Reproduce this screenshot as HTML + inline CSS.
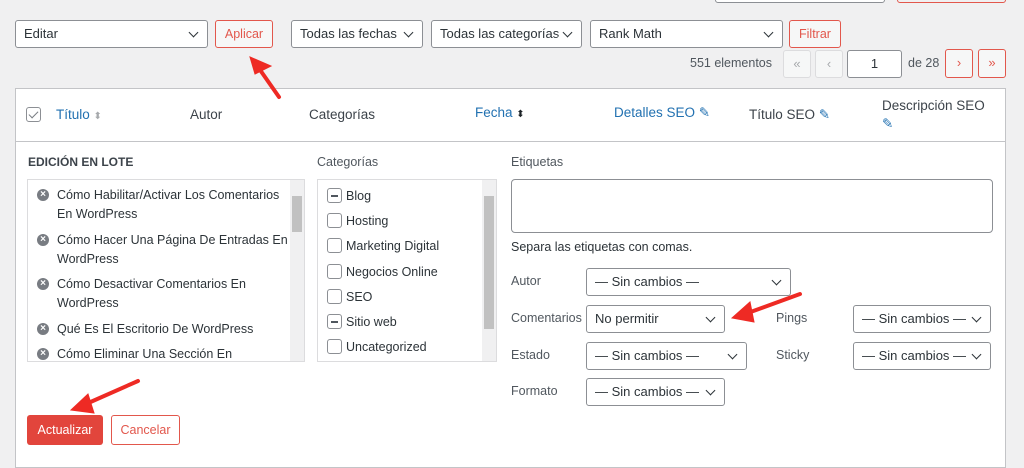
<!DOCTYPE html>
<html><head><meta charset="utf-8"><style>
*{box-sizing:border-box;margin:0;padding:0}
body{width:1024px;height:462px;background:#f0f0f1;font-family:"Liberation Sans",sans-serif;font-size:13px;color:#3c434a;position:relative;overflow:hidden}
.a{position:absolute}
.sel{position:absolute;background:#fff;border:1px solid #8c8f94;border-radius:3px;height:28px;padding:0 8px;line-height:26px;font-size:13px;color:#2c3338;white-space:nowrap;overflow:hidden}
.sel:after{content:"";position:absolute;right:10px;top:8px;width:6px;height:6px;border-right:1.6px solid #2c3338;border-bottom:1.6px solid #2c3338;transform:rotate(45deg);background:#fff;box-shadow:4px 4px 0 4px #fff}
.btn{position:absolute;border:1px solid #e2574c;border-radius:3px;background:#f6f7f7;color:#e2574c;text-align:center;font-size:12.5px}
.pg{position:absolute;border:1px solid #dcdcde;border-radius:3px;background:#f6f7f7;color:#a7aaad;text-align:center;height:28px;line-height:26px;width:28px}
.pr{border-color:#e2574c;color:#e2574c}
.lab{position:absolute;font-size:12.5px;color:#50575e}
.cb{display:inline-block;width:15px;height:15px;border:1px solid #8c8f94;border-radius:3px;vertical-align:-3px;margin-right:4px;position:relative;background:#fff}
.cb.m:after{content:"";position:absolute;left:3px;right:3px;top:6px;height:1.5px;background:#50575e}
.li{position:absolute;left:10px;font-size:12.5px;line-height:19px;color:#2c3338}
.x{position:absolute;left:-1px;top:3px;width:12px;height:12px;border-radius:50%;background:#787c82;color:#fff;font-size:10px;line-height:12px;text-align:center;font-weight:bold}
.blue{color:#2271b1}
</style></head><body>
<div class="a" style="left:715px;top:-10px;width:170px;height:13px;border:1px solid #8c8f94;border-radius:3px;background:#fff"></div>
<div class="a" style="left:897px;top:-10px;width:109px;height:13px;border:1px solid #e2574c;border-radius:3px"></div>

<div class="sel" style="left:15px;top:20px;width:193px">Editar</div>
<div class="btn" style="left:215px;top:20px;width:58px;height:28px;line-height:26px">Aplicar</div>
<div class="sel" style="left:291px;top:20px;width:132px">Todas las fechas</div>
<div class="sel" style="left:431px;top:20px;width:151px">Todas las categorías</div>
<div class="sel" style="left:590px;top:20px;width:193px">Rank Math</div>
<div class="btn" style="left:789px;top:20px;width:52px;height:28px;line-height:26px">Filtrar</div>

<div class="a" style="left:690px;top:56px;font-size:12.5px;color:#50575e">551 elementos</div>
<div class="pg" style="left:783px;top:50px">«</div>
<div class="pg" style="left:815px;top:50px">‹</div>
<div class="a" style="left:847px;top:50px;width:55px;height:28px;border:1px solid #8c8f94;border-radius:3px;background:#fff;text-align:center;line-height:26px;color:#2c3338">1</div>
<div class="a" style="left:908px;top:56px;font-size:12.5px;color:#50575e">de 28</div>
<div class="pg pr" style="left:945px;top:49px;height:29px">›</div>
<div class="pg pr" style="left:978px;top:49px;height:29px">»</div>

<div class="a" style="left:15px;top:88px;width:991px;height:380px;background:#fff;border:1px solid #c3c4c7"></div>
<div class="a" style="left:15px;top:141px;width:991px;height:1px;background:#c3c4c7"></div>
<div class="a" style="left:26px;top:107px"><span class="cb" style="width:15px;height:15px"><span style="position:absolute;left:4px;top:1px;width:5px;height:9px;border-right:1.5px solid #787c82;border-bottom:1.5px solid #787c82;transform:rotate(45deg)"></span></span></div>
<div class="a blue" style="left:56px;top:107px;font-size:13.5px">Título <span style="color:#a7aaad;font-size:10px">⬍</span></div>
<div class="a" style="left:190px;top:107px;font-size:13.5px">Autor</div>
<div class="a" style="left:309px;top:107px;font-size:13.5px">Categorías</div>
<div class="a blue" style="left:475px;top:105px;font-size:13.5px">Fecha <span style="color:#1d2327;font-size:10px">⬍</span></div>
<div class="a blue" style="left:614px;top:105px;font-size:13.5px">Detalles SEO <span>✎</span></div>
<div class="a" style="left:749px;top:107px;font-size:13.5px">Título SEO <span class="blue">✎</span></div>
<div class="a" style="left:882px;top:97px;font-size:13.5px;line-height:18px">Descripción SEO<br><span class="blue">✎</span></div>

<div class="a" style="left:28px;top:155px;font-size:12px;font-weight:bold;color:#3c434a">EDICIÓN EN LOTE</div>
<div class="a" style="left:27px;top:179px;width:278px;height:183px;border:1px solid #dcdcde;overflow:hidden">
<div class="li" style="top:6px"><span class="x" style="left:-1px">×</span><div style="padding-left:19px">Cómo Habilitar/Activar Los Comentarios<br>En WordPress</div></div>
<div class="li" style="top:51px"><span class="x">×</span><div style="padding-left:19px">Cómo Hacer Una Página De Entradas En<br>WordPress</div></div>
<div class="li" style="top:95px"><span class="x">×</span><div style="padding-left:19px">Cómo Desactivar Comentarios En<br>WordPress</div></div>
<div class="li" style="top:140px"><span class="x">×</span><div style="padding-left:19px">Qué Es El Escritorio De WordPress</div></div>
<div class="li" style="top:165px"><span class="x">×</span><div style="padding-left:19px">Cómo Eliminar Una Sección En</div></div>
<div class="a" style="right:0;top:0;width:14px;height:183px;background:#f0f0f1"></div>
<div class="a" style="right:2px;top:16px;width:10px;height:36px;background:#c1c1c1"></div>
</div>
<div class="a" style="left:317px;top:155px;font-size:12.5px;color:#50575e">Categorías</div>
<div class="a" style="left:317px;top:179px;width:180px;height:183px;border:1px solid #dcdcde;overflow:hidden;font-size:12.5px;color:#2c3338">
<div class="a" style="left:9px;top:4px;line-height:25.2px"><span class="cb m"></span>Blog<br><span class="cb"></span>Hosting<br><span class="cb"></span>Marketing Digital<br><span class="cb"></span>Negocios Online<br><span class="cb"></span>SEO<br><span class="cb m"></span>Sitio web<br><span class="cb"></span>Uncategorized</div>
<div class="a" style="right:0;top:0;width:14px;height:183px;background:#f0f0f1"></div>
<div class="a" style="right:2px;top:16px;width:10px;height:133px;background:#c1c1c1"></div>
</div>

<div class="lab" style="left:511px;top:155px">Etiquetas</div>
<div class="a" style="left:511px;top:179px;width:482px;height:54px;border:1px solid #8c8f94;border-radius:4px"></div>
<div class="lab" style="left:511px;top:240px;color:#2c3338">Separa las etiquetas con comas.</div>
<div class="lab" style="left:511px;top:274px">Autor</div>
<div class="sel" style="left:586px;top:268px;width:205px">— Sin cambios —</div>
<div class="lab" style="left:511px;top:311px">Comentarios</div>
<div class="sel" style="left:586px;top:305px;width:139px">No permitir</div>
<div class="lab" style="left:776px;top:311px">Pings</div>
<div class="sel" style="left:853px;top:305px;width:138px">— Sin cambios —</div>
<div class="lab" style="left:511px;top:348px">Estado</div>
<div class="sel" style="left:586px;top:342px;width:161px">— Sin cambios —</div>
<div class="lab" style="left:776px;top:348px">Sticky</div>
<div class="sel" style="left:853px;top:342px;width:138px">— Sin cambios —</div>
<div class="lab" style="left:511px;top:384px">Formato</div>
<div class="sel" style="left:586px;top:378px;width:139px">— Sin cambios —</div>

<div class="a" style="left:27px;top:415px;width:76px;height:30px;background:#e2453c;border-radius:3px;color:#fff;text-align:center;line-height:30px;font-size:12.5px">Actualizar</div>
<div class="btn" style="left:111px;top:415px;width:69px;height:30px;line-height:28px;background:#fff">Cancelar</div>

<svg class="a" style="left:0;top:0" width="1024" height="462">
<g stroke="#ee2a24" stroke-width="4" fill="#ee2a24" stroke-linecap="round">
<line x1="279" y1="97" x2="258" y2="67"/><polygon points="250,57 271,66 255,74" stroke-width="1"/>
<line x1="800" y1="294" x2="745" y2="314"/><polygon points="732,318 750,302 754,322" stroke-width="1"/>
<line x1="138" y1="381" x2="86" y2="404"/><polygon points="71,410 88,394 94,413" stroke-width="1"/>
</g></svg>
</body></html>
